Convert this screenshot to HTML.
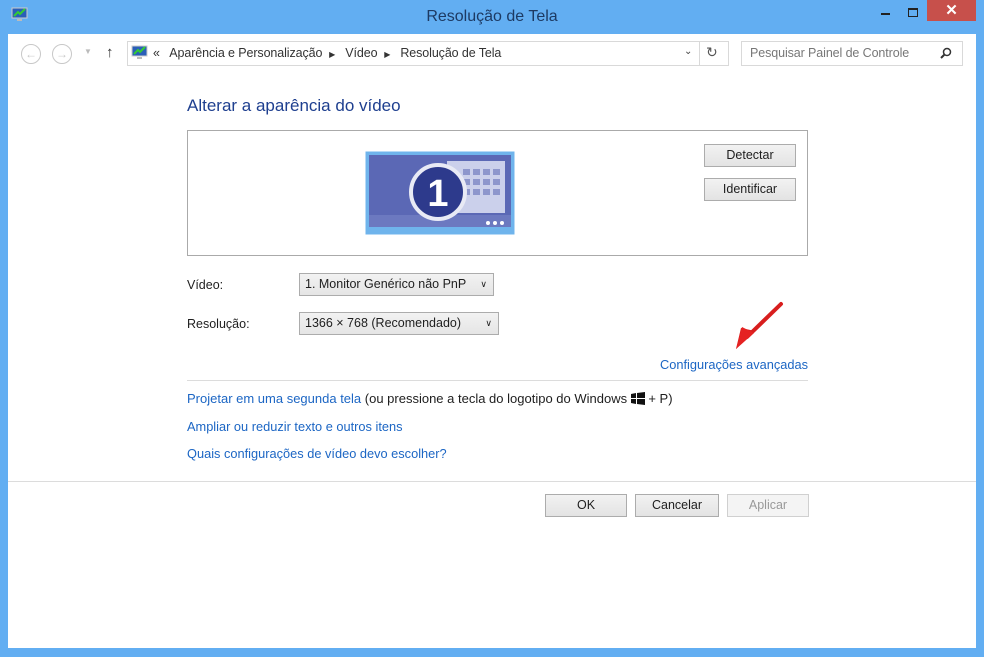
<!DOCTYPE html>
<html><head><meta charset="utf-8"><style>
*{margin:0;padding:0;box-sizing:border-box}
body{width:984px;height:657px;background:#62aef2;font-family:"Liberation Sans",sans-serif;font-size:12px;color:#1e1e1e;position:relative;overflow:hidden}
.a{position:absolute;white-space:nowrap}
.win{position:absolute;left:8px;top:34px;width:968px;height:614px;background:#fff}
.btn{position:absolute;height:23px;background:linear-gradient(#f2f2f2,#e3e3e3);border:1px solid #acacac;text-align:center;line-height:21px;font-size:12.5px}
.sel{position:absolute;height:23px;background:linear-gradient(#f2f2f2,#e5e5e5);border:1px solid #acacac;line-height:21px;padding-left:5px;font-size:12.5px}
.lnk{color:#1c66c4}
</style></head><body>
<svg class="a" style="left:11px;top:7px" width="17" height="16" viewBox="0 0 17 16"><rect x="1" y="1" width="15" height="10" fill="#2a5fb8" stroke="#ccc"/><path d="M3 9l4-4 2 2 5-5" stroke="#3c3" stroke-width="2" fill="none"/><rect x="6" y="12" width="5" height="2" fill="#bbb"/></svg>
<div class="a" style="left:0;width:984px;top:8px;text-align:center;font-size:16px;color:#1d3a63">Resolução de Tela</div>
<div class="a" style="left:881px;top:13px;width:9px;height:2px;background:#222"></div>
<div class="a" style="left:908px;top:8px;width:10px;height:9px;border:1px solid #222;border-top-width:2px"></div>
<div class="a" style="left:927px;top:0;width:49px;height:21px;background:#c7504b;color:#fff;text-align:center;font-size:15px;line-height:21px;font-weight:bold">✕</div>
<div class="win"></div>
<div class="a" style="left:21px;top:44px;width:20px;height:20px;border:1px solid #c8c8c8;border-radius:50%;color:#c8c8c8;text-align:center;line-height:18px;font-size:12px">←</div>
<div class="a" style="left:52px;top:44px;width:20px;height:20px;border:1px solid #c8c8c8;border-radius:50%;color:#c8c8c8;text-align:center;line-height:18px;font-size:12px">→</div>
<div class="a" style="left:84px;top:47px;color:#bbb;font-size:8px">▼</div>
<div class="a" style="left:106px;top:44px;font-size:15px;color:#333">↑</div>
<div class="a" style="left:127px;top:41px;width:602px;height:25px;border:1px solid #d9d9d9"></div>
<div class="a" style="left:699px;top:41px;width:1px;height:25px;background:#d9d9d9"></div>
<svg class="a" style="left:131px;top:45px" width="17" height="16" viewBox="0 0 17 16"><rect x="1" y="1" width="15" height="10" fill="#2a5fb8" stroke="#ccc"/><path d="M3 9l4-4 2 2 5-5" stroke="#3c3" stroke-width="2" fill="none"/><rect x="6" y="12" width="5" height="2" fill="#bbb"/></svg>
<div class="a" style="left:153px;top:46px;color:#333;font-size:12.5px;letter-spacing:-0.1px">«&nbsp;&nbsp; Aparência e Personalização&nbsp;&nbsp;<span style="font-size:8px">▶</span>&nbsp;&nbsp; Vídeo&nbsp;&nbsp;<span style="font-size:8px">▶</span>&nbsp;&nbsp; Resolução de Tela</div>
<div class="a" style="left:684px;top:46px;color:#444;font-size:10px">⌄</div>
<div class="a" style="left:706px;top:44px;color:#555;font-size:14px">↻</div>
<div class="a" style="left:741px;top:41px;width:222px;height:25px;border:1px solid #d9d9d9"></div>
<div class="a" style="left:750px;top:46px;color:#777;font-size:12.5px;letter-spacing:-0.1px">Pesquisar Painel de Controle</div>
<svg class="a" style="left:940px;top:47px" width="12" height="12"><circle cx="7" cy="5" r="3.5" stroke="#333" stroke-width="1.5" fill="none"/><path d="M4.5 7.5L1 11" stroke="#333" stroke-width="2"/></svg>
<div class="a" style="left:187px;top:96px;font-size:17px;color:#1e3f8f">Alterar a aparência do vídeo</div>
<div class="a" style="left:187px;top:130px;width:621px;height:126px;border:1px solid #aaa"></div>
<svg class="a" style="left:365px;top:151px" width="150" height="84" viewBox="0 0 150 84">
<rect x="0.5" y="0.5" width="149" height="83" fill="#6fb4ec"/>
<rect x="4" y="4" width="142" height="72" fill="#5b68b5"/>
<rect x="4" y="64" width="142" height="12" fill="#6c79c0"/>
<rect x="82" y="10" width="58" height="52" fill="#dfe3f5" opacity=".85"/>
<g fill="#8d96cc"><rect x="98" y="18" width="7" height="6"/><rect x="108" y="18" width="7" height="6"/><rect x="118" y="18" width="7" height="6"/><rect x="128" y="18" width="7" height="6"/><rect x="98" y="28" width="7" height="6"/><rect x="108" y="28" width="7" height="6"/><rect x="118" y="28" width="7" height="6"/><rect x="128" y="28" width="7" height="6"/><rect x="98" y="38" width="7" height="6"/><rect x="108" y="38" width="7" height="6"/><rect x="118" y="38" width="7" height="6"/><rect x="128" y="38" width="7" height="6"/></g>
<circle cx="123" cy="72" r="2" fill="#fff"/><circle cx="130" cy="72" r="2" fill="#fff"/><circle cx="137" cy="72" r="2" fill="#fff"/>
<circle cx="73" cy="41" r="27" fill="#2d3a8c" stroke="#e8eaf5" stroke-width="4"/>
<text x="73" y="55" text-anchor="middle" font-family="Liberation Sans" font-weight="bold" font-size="38" fill="#fff">1</text>
</svg>
<div class="btn" style="left:704px;top:144px;width:92px">Detectar</div>
<div class="btn" style="left:704px;top:178px;width:92px">Identificar</div>
<div class="a" style="left:187px;top:278px;font-size:12.5px">Vídeo:</div>
<div class="sel" style="left:299px;top:273px;width:195px">1. Monitor Genérico não PnP <span style="position:absolute;right:6px;font-size:9px">∨</span></div>
<div class="a" style="left:187px;top:317px;font-size:12.5px">Resolução:</div>
<div class="sel" style="left:299px;top:312px;width:200px">1366 × 768 (Recomendado) <span style="position:absolute;right:6px;font-size:9px">∨</span></div>
<svg class="a" style="left:733px;top:301px" width="52" height="52" viewBox="0 0 52 52"><path d="M48 3L14 36" stroke="#d81e1e" stroke-width="4" stroke-linecap="round"/><path d="M3 48L22 30 8 27z" fill="#d81e1e"/><path d="M3 48l6-22 12 6z" fill="#e52222"/></svg>
<div class="a lnk" style="left:660px;top:357px;font-size:12.8px">Configurações avançadas</div>
<div class="a" style="left:187px;top:380px;width:621px;height:1px;background:#dcdcdc"></div>
<div class="a" style="left:187px;top:391px;font-size:13px"><span class="lnk">Projetar em uma segunda tela</span> (ou pressione a tecla do logotipo do Windows <svg width="14" height="13" style="vertical-align:-2px" viewBox="0 0 14 13"><path d="M0 2l5-1v5H0zM6 1l8-1v6H6zM0 7h5v5l-5-1zM6 7h8v6l-8-1z" fill="#111"/></svg> + P)</div>
<div class="a lnk" style="left:187px;top:419px;font-size:12.8px">Ampliar ou reduzir texto e outros itens</div>
<div class="a lnk" style="left:187px;top:446px;font-size:12.8px">Quais configurações de vídeo devo escolher?</div>
<div class="a" style="left:8px;top:481px;width:968px;height:1px;background:#dcdcdc"></div>
<div class="btn" style="left:545px;top:494px;width:82px">OK</div>
<div class="btn" style="left:635px;top:494px;width:84px">Cancelar</div>
<div class="btn" style="left:727px;top:494px;width:82px;color:#999;border-color:#d0d0d0;background:#f4f4f4">Aplicar</div>
</body></html>
